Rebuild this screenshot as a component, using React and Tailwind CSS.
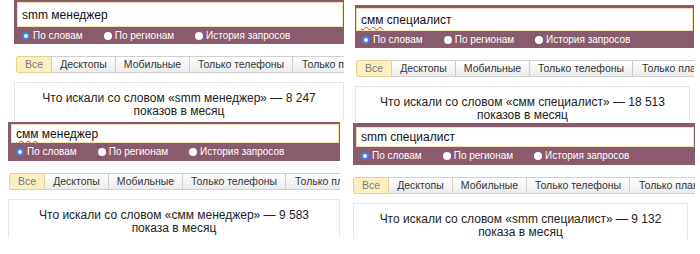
import React from "react";

const Radio = ({ on, label }) => (
  <div className="flex items-center gap-[3px]">
    {on ? (
      <span className="block w-[8px] h-[8px] rounded-full border-[2px] border-[#3d7fe6] bg-white" />
    ) : (
      <span className="block w-[8px] h-[8px] rounded-full bg-white" />
    )}
    <span className="text-[10px] leading-none text-white">{label}</span>
  </div>
);

const Tabs = ({ cls }) => (
  <div className={"flex text-[10.5px] leading-none text-[#333] whitespace-nowrap overflow-hidden " + cls}>
    <div className="w-[36px] shrink-0 flex items-center justify-center bg-[#fcefc2] border border-[#e3d294] text-[#7a7a7a] rounded-l-[2px]">
      Все
    </div>
    <div className="w-[64px] shrink-0 flex items-center justify-center bg-gradient-to-b from-white to-[#ececec] border border-l-0 border-[#cfcfcf]">
      Десктопы
    </div>
    <div className="w-[74px] shrink-0 flex items-center justify-center bg-gradient-to-b from-white to-[#ececec] border border-l-0 border-[#cfcfcf]">
      Мобильные
    </div>
    <div className="w-[103px] shrink-0 flex items-center justify-center bg-gradient-to-b from-white to-[#ececec] border border-l-0 border-[#cfcfcf]">
      Только телефоны
    </div>
    <div className="w-[80px] shrink-0 flex items-center pl-[9px] bg-gradient-to-b from-white to-[#ececec] border border-l-0 border-[#cfcfcf]">
      Только планшеты
    </div>
  </div>
);

const Query = ({ text, typo }) =>
  typo ? (
    <>
      <span className="underline decoration-wavy decoration-[#e0303a] decoration-[1px] underline-offset-[2px]">
        {text.split(" ")[0]}
      </span>{" "}
      {text.split(" ").slice(1).join(" ")}
    </>
  ) : (
    text
  );

const Panel = ({ wrap, head, input, radios, tabs, box, query, typo, line1, line2 }) => (
  <div className={"flex flex-col overflow-hidden " + wrap}>
    <div className={"bg-[#8a5a6d] flex flex-col shrink-0 " + head}>
      <div className={"bg-white border border-[#eee0b0] flex items-center pl-[4px] text-[12px] text-[#111] shrink-0 " + input}>
        <span><Query text={query} typo={typo} /></span>
      </div>
      <div className={"flex items-center gap-[21px] " + radios}>
        <Radio on label="По словам" />
        <Radio label="По регионам" />
        <Radio label="История запросов" />
      </div>
    </div>
    <Tabs cls={tabs} />
    <div className={"border border-b-0 border-[#e6e6e6] flex flex-col items-center text-[12px] leading-[13px] text-[#222] pt-[9px] grow " + box}>
      <div>{line1}</div>
      <div>{line2}</div>
    </div>
  </div>
);

export default function App() {
  return (
    <div
      className="w-[700px] h-[254px] bg-white overflow-hidden grid grid-cols-[350px_350px] grid-rows-[122px_132px]"
      style={{ fontFamily: '"Liberation Sans", Arial, sans-serif' }}
    >
      <Panel
        wrap="ml-[14px] w-[330px] h-[122px]"
        head="h-[44px] pt-[2px] pl-[3px] pr-[1px]"
        input="h-[25px]"
        radios="h-[17px] pl-[5px]"
        tabs="h-[17px] mt-[12px] ml-[2px]"
        box="mt-[9px]"
        query="smm менеджер"
        line1="Что искали со словом «smm менеджер» — 8 247"
        line2="показов в месяц"
      />
      <Panel
        wrap="ml-[5px] w-[339px] h-[123px] pt-[5px]"
        head="h-[43px] pt-[3px] pl-[1px] pr-[1px]"
        input="h-[23px]"
        radios="h-[17px] pl-[6px]"
        tabs="h-[17px] mt-[12px] ml-[1px]"
        box="mt-[9px] w-[335px]"
        query="смм специалист"
        typo
        line1="Что искали со словом «смм специалист» — 18 513"
        line2="показов в месяц"
      />
      <Panel
        wrap="ml-[8px] w-[332px] h-[116px]"
        head="h-[39px] pt-[2px] pl-[3px] pr-[1px]"
        input="h-[19px]"
        radios="h-[18px] pl-[5px]"
        tabs="h-[17px] mt-[12px] ml-[1px]"
        box="mt-[9px]"
        query="смм менеджер"
        typo
        line1="Что искали со словом «смм менеджер» — 9 583"
        line2="показа в месяц"
      />
      <Panel
        wrap="ml-[3px] w-[342px] h-[116px] mt-[1px]"
        head="h-[42px] pt-[4px] pl-[3px] pr-[1px]"
        input="h-[20px]"
        radios="h-[18px] pl-[5px]"
        tabs="h-[17px] mt-[12px]"
        box="mt-[9px] w-[335px]"
        query="smm специалист"
        line1="Что искали со словом «smm специалист» — 9 132"
        line2="показа в месяц"
      />
    </div>
  );
}
